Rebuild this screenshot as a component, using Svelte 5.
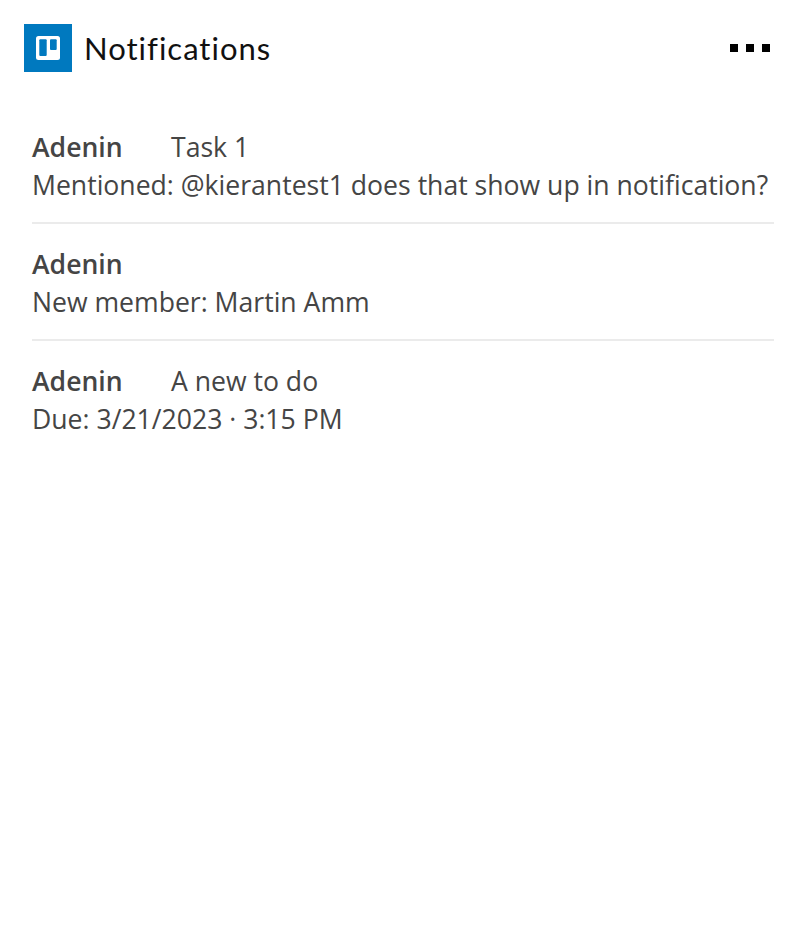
<script>
  const notifications = [
    { from: 'Adenin', title: 'Task 1', text: 'Mentioned: @kierantest1 does that show up in notification?' },
    { from: 'Adenin', title: '', text: 'New member: Martin Amm' },
    { from: 'Adenin', title: 'A new to do', text: 'Due: 3/21/2023 · 3:15 PM' }
  ];
</script>

<main>
  <header>
    <div class="title">
      <svg class="logo" width="48" height="48" viewBox="0 0 48 48" aria-hidden="true">
        <rect width="48" height="48" fill="#0079bf" />
        <rect x="12" y="12" width="24" height="24" rx="2.5" fill="#fff" />
        <rect x="15.3" y="15.3" width="7.4" height="16.7" rx="1" fill="#0079bf" />
        <rect x="26" y="15.3" width="6.7" height="10.7" rx="1" fill="#0079bf" />
      </svg>
      <h1>Notifications</h1>
    </div>
    <div class="menu" aria-label="More options">
      <span></span><span></span><span></span>
    </div>
  </header>

  <ul>
    {#each notifications as item}
      <li>
        <div class="top">
          <strong>{item.from}</strong>
          {#if item.title}<span>{item.title}</span>{/if}
        </div>
        <div class="text">{item.text}</div>
      </li>
    {/each}
  </ul>
</main>

<style>
  :global(body) {
    background: #fff;
  }
  main {
    font-family: "Open Sans", "Noto Sans", sans-serif;
    color: #454545;
  }
  header {
    display: flex;
    align-items: center;
    justify-content: space-between;
    padding: 24px 36px 0 24px;
  }
  .title {
    display: flex;
    align-items: center;
    gap: 12px;
  }
  .logo {
    display: block;
  }
  h1 {
    margin: 0;
    font-family: Lato, sans-serif;
    font-weight: 400;
    font-size: 31px;
    line-height: 46px;
    letter-spacing: 1px;
    font-variant-ligatures: none;
    color: #111;
  }
  .menu {
    display: flex;
    gap: 8px;
  }
  .menu span {
    width: 8px;
    height: 8px;
    background: #000;
  }
  ul {
    list-style: none;
    margin: 0;
    padding: 35px 32px 0;
  }
  li {
    padding: 22px 0 18px;
    border-bottom: 2px solid #ebebeb;
    font-size: 26.6px;
    line-height: 37.5px;
  }
  li:last-child {
    border-bottom: none;
  }
  .top {
    display: flex;
  }
  strong {
    width: 139px;
    font-weight: 600;
  }
  .text {
    white-space: nowrap;
  }
</style>
